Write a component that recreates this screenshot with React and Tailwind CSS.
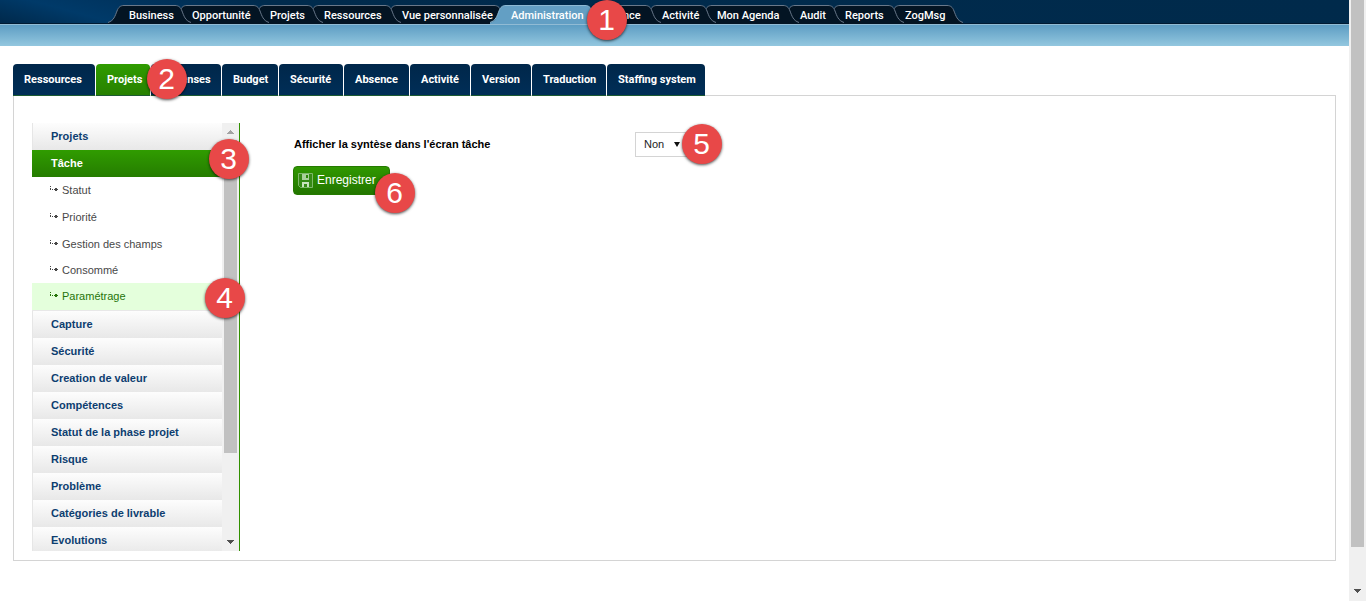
import React, { useState } from "react";

const mainTabs = [
  { label: "Business", size: "w-[63px]", layer: "z-[12]" },
  { label: "Opportunité", size: "w-[78px]", layer: "z-[11]" },
  { label: "Projets", size: "w-[54px]", layer: "z-10" },
  { label: "Ressources", size: "w-[78px]", layer: "z-[9]" },
  { label: "Vue personnalisée", size: "w-[109px]", layer: "z-[8]" },
  { label: "Administration", size: "w-[91px]", layer: "z-20", active: true, badge: 1 },
  { label: "Finance", size: "w-[60px]", layer: "z-[6]" },
  { label: "Activité", size: "w-[55px]", layer: "z-[5]" },
  { label: "Mon Agenda", size: "w-[83px]", layer: "z-[4]" },
  { label: "Audit", size: "w-[45px]", layer: "z-[3]" },
  { label: "Reports", size: "w-[60px]", layer: "z-[2]" },
  { label: "ZogMsg", size: "w-[59px]", layer: "z-[1]" },
];

const subTabs = [
  { label: "Ressources", size: "w-[82px]" },
  { label: "Projets", size: "w-[54px]", active: true },
  { label: "Dépenses", size: "w-[70px]" },
  { label: "Budget", size: "w-[56px]" },
  { label: "Sécurité", size: "w-[64px]" },
  { label: "Absence", size: "w-[65px]" },
  { label: "Activité", size: "w-[60px]" },
  { label: "Version", size: "w-[60px]" },
  { label: "Traduction", size: "w-[74px]" },
  { label: "Staffing system", size: "w-[98px]" },
];

const taskItems = [
  { label: "Statut", size: "h-[27px]" },
  { label: "Priorité", size: "h-[27px]" },
  { label: "Gestion des champs", size: "h-[26px]" },
  { label: "Consommé", size: "h-[26px]" },
  { label: "Paramétrage", size: "h-[27px]", active: true },
];

const sections = [
  "Capture",
  "Sécurité",
  "Creation de valeur",
  "Compétences",
  "Statut de la phase projet",
  "Risque",
  "Problème",
  "Catégories de livrable",
  "Evolutions",
];

function Badge({ n, className }) {
  return (
    <span
      className={`pointer-events-none absolute z-30 flex size-10 items-center justify-center rounded-full bg-[#e84848] pr-px text-[30px] leading-none font-normal text-white shadow-[0_1px_3px_rgba(0,0,0,0.7)] ${className}`}
    >
      {n}
    </span>
  );
}

function TabCap({ active, flip }) {
  return (
    <svg viewBox="0 0 20 19" className={`h-[19px] w-5 shrink-0 ${flip ? "-scale-x-100" : ""}`}>
      <path
        d="M0 18C6 16 7 11 9 6C10.500 2 12.500 .5 16 .5H20V19H0Z"
        fill={active ? "#639fc4" : "#031423"}
      />
      <path
        d="M0 17.500C6 15.500 7 11 9 6C10.500 2 12.500 .5 16 .5H20"
        fill="none"
        stroke={active ? "#8db9d3" : "#69788a"}
      />
    </svg>
  );
}

function MainTab({ tab }) {
  return (
    <li className={`relative shrink-0 ${tab.size} ${tab.layer}`}>
      <span className="absolute inset-y-0 -right-[10px] -left-[10px] flex">
        <TabCap active={tab.active} />
        <span
          className={`h-[19px] flex-1 border-t ${
            tab.active ? "border-[#8db9d3] bg-[#639fc4]" : "border-[#69788a] bg-[#031423]"
          }`}
        />
        <TabCap active={tab.active} flip />
      </span>
      <a
        href="#"
        className="relative block pl-[11px] font-['Roboto'] text-[11px] leading-[21px] font-medium whitespace-nowrap text-white"
      >
        {tab.label}
      </a>
      {tab.badge && <Badge n={tab.badge} className="-top-[5px] left-[87px]" />}
    </li>
  );
}

function Arrow({ up, className }) {
  return (
    <svg viewBox="0 0 7 4" className={`h-1 w-[7px] ${className}`} shapeRendering="crispEdges" aria-hidden="true">
      <path d={up ? "M3 0h1v1h1v1h1v1h1v1H0V3h1V2h1V1h1z" : "M0 0h7v1H6v1H5v1H4v1H3V3H2V2H1V1H0z"} fill="currentColor" />
    </svg>
  );
}

function SectionLink({ children }) {
  return (
    <a
      href="#"
      className="block h-[27px] border-l border-[#e6e6e6] bg-linear-to-b from-[#fdfdfd] to-[#e8e8e8] pl-[18px] text-[11px] leading-[27px] font-bold text-[#0d3e70]"
    >
      {children}
    </a>
  );
}

function Sidebar() {
  return (
    <div className="relative w-52 shrink-0">
      <nav className="flex h-[428px] overflow-hidden border-r border-[#319000]">
        <div className="min-w-0 flex-1">
          <SectionLink>Projets</SectionLink>
          <a
            href="#"
            className="block h-[27px] bg-linear-to-b from-[#309c00] to-[#257c00] pl-[19px] text-[11px] leading-[27px] font-bold text-white"
          >
            Tâche
          </a>
          <ul className="border-b border-[#e8e8e8]">
            {taskItems.map((item) => (
              <li key={item.label}>
                <a
                  href="#"
                  className={`flex items-center pl-[18px] text-[11px] ${item.size} ${
                    item.active ? "bg-[#e4ffdc] text-[#26740a]" : "text-[#484848]"
                  }`}
                >
                  <svg viewBox="0 0 8 6" className="mr-1 mb-[3px] h-1.5 w-2 shrink-0" shapeRendering="crispEdges" aria-hidden="true">
                    <path d="M0 0h1v1H0zM0 2h1v2H0zM2 3h1v1H2zM4 3h4v1H4zM5 2h2v3H5z" fill="currentColor" />
                  </svg>
                  <span>{item.label}</span>
                </a>
              </li>
            ))}
          </ul>
          {sections.map((name) => (
            <SectionLink key={name}>{name}</SectionLink>
          ))}
        </div>
        <div className="flex w-[17px] flex-col items-center bg-[#f0f0f0] pt-[7px] pb-[7px]" aria-hidden="true">
          <Arrow up className="shrink-0 text-[#a3a3a3]" />
          <div className="mt-[6px] mr-px h-[313px] w-[13px] bg-[#c1c1c1]" />
          <Arrow className="mt-auto shrink-0 text-[#505050]" />
        </div>
      </nav>
      <Badge n={3} className="top-4 -right-[9px]" />
      <Badge n={4} className="top-[155px] -right-[5px]" />
    </div>
  );
}

function SaveIcon() {
  return (
    <svg viewBox="0 0 15 15" className="size-[15px] shrink-0" aria-hidden="true">
      <path d="M.5 .5H14.500V14.500H2.500L.5 12.500Z" fill="#368a16" stroke="#7fb96a" />
      <path d="M4 1H11V7H4Z" fill="#a9d19a" />
      <path d="M8 2H10V5H8Z" fill="#2c8606" />
      <path d="M4 14V9H11V14H9V11H6V14Z" fill="#c9e3bf" />
    </svg>
  );
}

function Settings() {
  const [choice, setChoice] = useState("Non");
  return (
    <form className="ml-[53px] flex-1 pt-[9px]" onSubmit={(e) => e.preventDefault()}>
      <div className="flex items-center">
        <label htmlFor="synthese" className="w-[342px] pl-px text-[11px] font-bold text-black">
          Afficher la syntèse dans l'écran tâche
        </label>
        <div className="relative">
          <select
            id="synthese"
            value={choice}
            onChange={(e) => setChoice(e.target.value)}
            className="block h-[25px] w-[62px] appearance-none border border-[#d4d4d4] bg-white pl-2 text-[11px] text-[#222]"
          >
            <option>Non</option>
            <option>Oui</option>
          </select>
          <svg viewBox="0 0 6 5" className="pointer-events-none absolute top-[10px] left-[39px] h-[5px] w-1.5" aria-hidden="true">
            <path d="M0 0H6L3 5Z" fill="#111" />
          </svg>
          <Badge n={5} className="-top-2 left-[47px]" />
        </div>
      </div>
      <div className="relative mt-[9px] inline-block">
        <button
          type="submit"
          className="flex h-[29px] w-[97px] items-center gap-1 rounded-sm border border-[#257a00] bg-linear-to-b from-[#309800] to-[#237600] pl-1 text-xs text-white"
        >
          <SaveIcon />
          <span className="pb-0.5">Enregistrer</span>
        </button>
        <Badge n={6} className="top-[7px] left-[82px]" />
      </div>
    </form>
  );
}

export default function App() {
  return (
    <div className="flex min-h-screen bg-white font-['Liberation_Sans',Arial,sans-serif]">
      <div className="min-w-0 flex-1">
        <header>
          <div className="h-6 border-b border-[#001b33] bg-[#002b4e] bg-[linear-gradient(15deg,#00294b_0%,#003a69_8%,#003561_13%,#002b4d_24%,#002a4b_100%)] pt-[5px]">
            <ul className="flex pl-[118px]">
              {mainTabs.map((tab) => (
                <MainTab key={tab.label} tab={tab} />
              ))}
            </ul>
          </div>
          <div className="h-[22px] border-t border-[#91bbd4] bg-linear-to-b from-[#5d9dc3] to-[#93c7df]" />
        </header>
        <main className="px-[13px] pt-[18px]">
          <nav className="relative">
            <ul className="flex gap-px">
              {subTabs.map((tab) => (
                <li key={tab.label} className={tab.size}>
                  <a
                    href="#"
                    className={`block h-8 rounded-t border-b border-[#1d5b32] pl-[11px] font-['Roboto'] text-[11px] leading-[31px] font-bold whitespace-nowrap text-white ${
                      tab.active
                        ? "bg-linear-to-b from-[#309c00] to-[#278000]"
                        : "bg-linear-to-b from-[#00274a] to-[#002e57]"
                    }`}
                  >
                    {tab.label}
                  </a>
                </li>
              ))}
            </ul>
            <Badge n={2} className="-top-[5px] left-[134px]" />
          </nav>
          <section className="-mt-px flex border border-[#d4d4d4] pt-[27px] pb-[9px] pl-[18px]">
            <Sidebar />
            <Settings />
          </section>
        </main>
      </div>
      <div className="flex w-[17px] flex-col items-center bg-[#f0f0f0] pb-2" aria-hidden="true">
        <div className="h-[547px] w-[13px] bg-[#c1c1c1]" />
        <Arrow className="mt-auto text-[#505050]" />
      </div>
    </div>
  );
}
